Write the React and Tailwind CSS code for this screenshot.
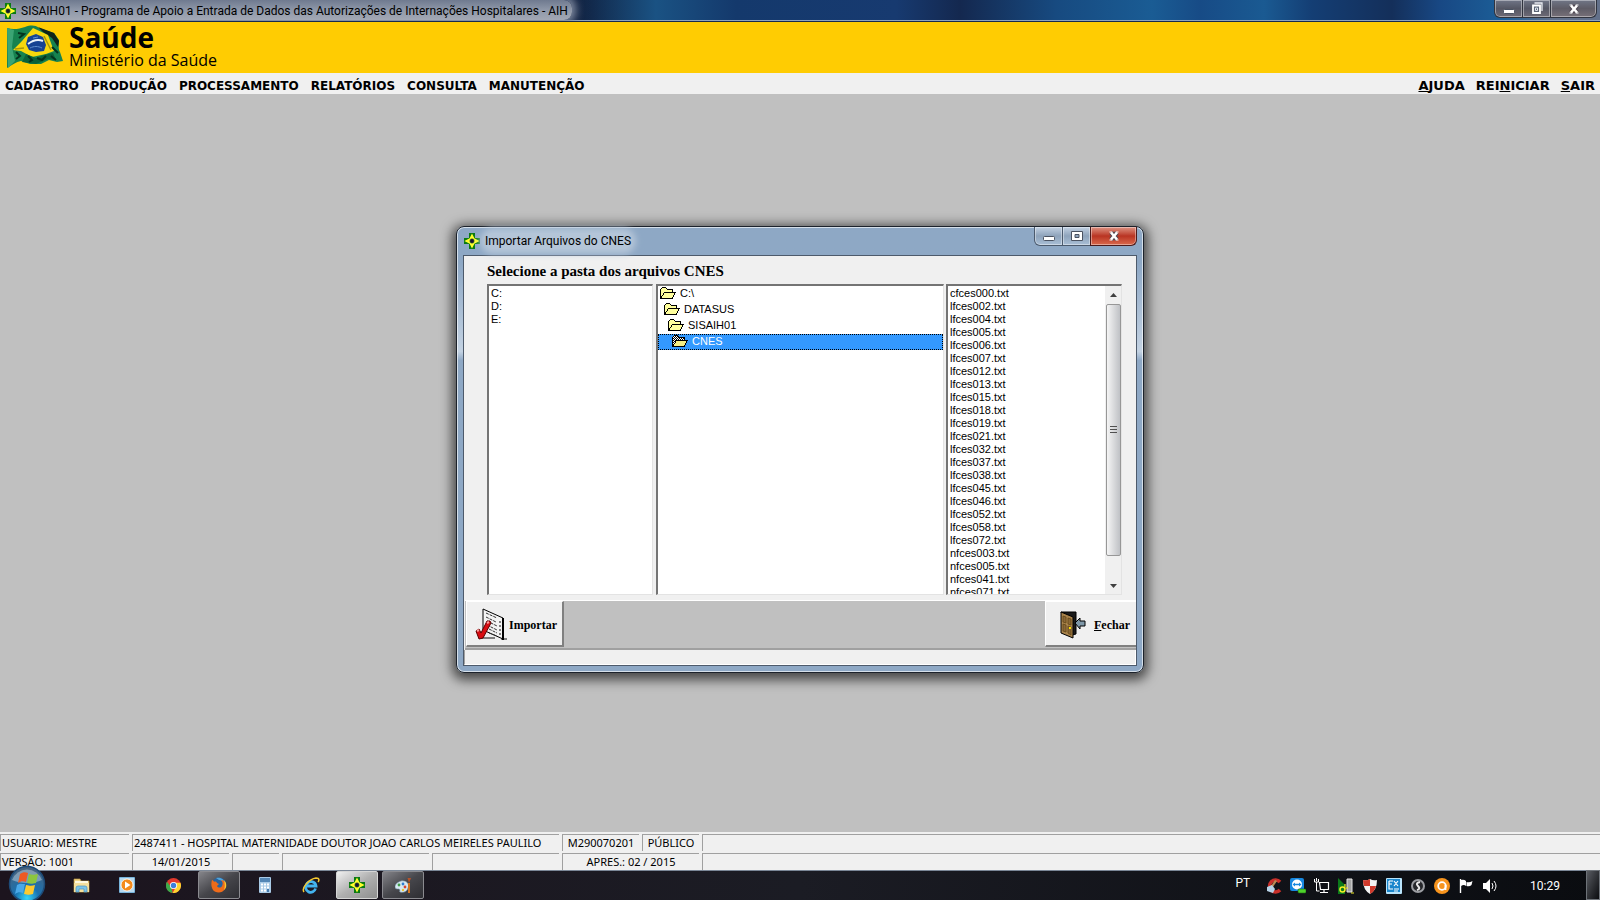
const MENU = ['CADASTRO', 'PRODUÇÃO', 'PROCESSAMENTO', 'RELATÓRIOS', 'CONSULTA', 'MANUTENÇÃO'];

const MENU_RIGHT = [
  ['', 'A', 'JUDA'],
  ['REI', 'N', 'ICIAR'],
  ['', 'S', 'AIR'],
];

const DRIVES = ['C:', 'D:', 'E:'];

const FILES = [
  'cfces000.txt', 'lfces002.txt', 'lfces004.txt', 'lfces005.txt', 'lfces006.txt', 'lfces007.txt',
  'lfces012.txt', 'lfces013.txt', 'lfces015.txt', 'lfces018.txt', 'lfces019.txt', 'lfces021.txt',
  'lfces032.txt', 'lfces037.txt', 'lfces038.txt', 'lfces045.txt', 'lfces046.txt', 'lfces052.txt',
  'lfces058.txt', 'lfces072.txt', 'nfces003.txt', 'nfces005.txt', 'nfces041.txt', 'nfces071.txt',
];

function CrossIcon({ size = 16 }) {
  return (
    <svg width={size} height={size} viewBox="0 0 16 16" className="shrink-0">
      <path d="M5 0h6v5h5v6h-5v5H5v-5H0V5h5z" fill="#0a7a12" />
      <path d="M8 2l2 4 4 2-4 2-2 4-2-4-4-2 4-2z" fill="#ffff2e" stroke="#ffff2e" strokeWidth="1.4" />
      <circle cx="8" cy="8" r="2.2" fill="#141430" stroke="#3c6a2a" strokeWidth=".6" />
    </svg>
  );
}

function FolderIcon({ selected }) {
  return (
    <svg width="16" height="13" viewBox="0 0 16 13" className="shrink-0" shapeRendering="crispEdges">
      <defs>
        <pattern id="dither" width="2" height="2" patternUnits="userSpaceOnUse">
          <rect width="2" height="2" fill="#fff" />
          <rect width="1" height="1" fill="#000" />
          <rect x="1" y="1" width="1" height="1" fill="#000" />
        </pattern>
      </defs>
      <path d="M.5 11.500V2.500l2-2h3l2 2h5v3" fill={selected ? 'url(#dither)' : '#ffff9c'} stroke="#000" />
      <path d="M.5 11.500l4-6h11l-3.500 6z" fill={selected ? '#f5ef86' : '#ffff9c'} stroke="#000" />
    </svg>
  );
}

function FlagLogo() {
  return (
    <svg width="58" height="44" viewBox="0 0 58 44" className="shrink-0">
      <path d="M1 3c6 2 12 1 18-1s10-2 14 1l15 5 5 7c0 5-1 9 1 12l3 9-6 1-8-2-8 4-11 0-9-3c-5 1-9 4-14 7z" fill="#16824f" />
      <path d="M32 2l16 6 5 8-1 6-6-9-9-6z" fill="#10241a" />
      <path d="M1 3l7 2-2 17 3 14-7 7z" fill="#3ba474" />
      <path d="M7 25l9-9 11-13 15 7 6 16-8 3-14 3-11-6z" fill="#f7d70c" />
      <path d="M20 29l-4 8 14 2 12-5 8 1-3-7-9 2-8 3z" fill="#0b6139" />
      <path d="M22 31l4 4-3 2M31 33l5 2 4-4M10 27l4 4-4 3M45 31l5 4M46 22l6 6M12 8l6 1-5 4" stroke="#04331e" strokeWidth="2" fill="none" />
      <path d="M38 11l7 14M9 24l9-1" stroke="#a89609" strokeWidth="1.500" fill="none" />
      <path d="M22 12l8-3 7 3 3 8-2 6-8 1-7-2-3-6z" fill="#164393" />
      <path d="M22 19c5-4 10-5 15-3" stroke="#e8f1fa" strokeWidth="2" fill="none" />
      <path d="M24 23c4-2 8-2 12 0M27 13l5-1" stroke="#5f8fce" strokeWidth="1" fill="none" />
    </svg>
  );
}

function WindowGlyph({ kind }) {
  if (kind === 'min') {
    return (
      <svg width="14" height="12" viewBox="0 0 14 12">
        <rect x="1.500" y="6.500" width="11" height="4" rx="1" fill="#fff" stroke="#4a5261" />
      </svg>
    );
  }
  if (kind === 'max') {
    return (
      <svg width="14" height="12" viewBox="0 0 14 12">
        <path d="M1.500 1.500h11v9h-11z M5 4.500v3h4v-3z" fill="#fff" stroke="#4a5261" fillRule="evenodd" />
      </svg>
    );
  }
  if (kind === 'restore') {
    return (
      <svg width="12" height="13" viewBox="0 0 12 13">
        <path d="M3.500 1h7.500v8" fill="none" stroke="#e9ecf2" strokeWidth="1.300" />
        <path d="M2 3.500h7v7.500H2z" fill="#5c6575" stroke="#fff" strokeWidth="1.800" />
        <path d="M4.500 6h2v2.500h-2z" fill="none" stroke="#dfe4ec" />
      </svg>
    );
  }
  return (
    <svg width="12" height="12" viewBox="0 0 12 12">
      <path d="M3 2.500l6 7M9 2.500l-6 7" stroke="#4d4650" strokeWidth="4.500" />
      <path d="M3 2.500l6 7M9 2.500l-6 7" stroke="#fff" strokeWidth="2.600" />
      <path d="M1.500 2h3M7.500 2h3M1.500 10h3M7.500 10h3" stroke="#fff" strokeWidth="1.200" />
    </svg>
  );
}

function ImportIcon() {
  return (
    <svg width="32" height="33" viewBox="0 0 32 33" className="shrink-0">
      <path d="M6 30h14M26 31h6" stroke="#808080" strokeWidth="2" />
      <path d="M8 1l20 9v21L8 22z" fill="#f4f4f4" stroke="#000" />
      <path d="M28 10v22" stroke="#000" strokeWidth="2" />
      <path d="M11 5l11 5M11 9l10 5M12 13l10 5M12 17l10 5M14 21l8 4M14 25l8 3" stroke="#333" strokeWidth="1" strokeDasharray="3 1" />
      <path d="M25 13v15" stroke="#111" strokeWidth="1" strokeDasharray="2 2" />
      <path d="M1 23l3-2 2 4 6-12 3 0 1 2-8 15-4 1z" fill="#d80d12" stroke="#5a0000" />
      <path d="M2 23l2-1M12 15l2-1" stroke="#ff9a9a" strokeWidth="2" />
    </svg>
  );
}

function DoorIcon() {
  return (
    <svg width="26" height="28" viewBox="0 0 26 28" className="shrink-0">
      <path d="M1 1h15v22l-4 1z" fill="#1b1b1b" stroke="#000" />
      <path d="M1 1l12 5v21L1 22z" fill="#a9834b" stroke="#000" />
      <path d="M3 5l3 1v6l-3-1zM8 7l3 1v6l-3-1zM3 13l3 1v7l-3-1zM8 15l3 1v8l-3-2z" fill="#8a6838" stroke="#634617" strokeWidth=".8" />
      <rect x="9" y="16" width="2" height="2" fill="#ffe800" />
      <path d="M15 12l5-5v3h5v5h-5v3z" fill="#7f98a8" stroke="#000" />
    </svg>
  );
}

function CaptionButtons({ active }) {
  const first = active
    ? 'from-[#c3d2e3] via-[#8ea3bb] to-[#a9bfd6] border-[#4b5a6d]'
    : 'from-[#707687] via-[#555764] to-[#6e6a75] border-[#30343f]';
  const close = active
    ? 'from-[#dd9283] via-[#b93322] to-[#d9684c] border-[#4b1a1a]'
    : 'from-[#707687] via-[#5e5c66] to-[#777078] border-[#30343f]';
  const mid = active ? 'max' : 'restore';
  return (
    <div className={`flex rounded-b-md ${active ? 'h-[19px]' : 'h-[18px]'}`}>
      <button aria-label="Minimizar" className={`flex w-[29px] items-center justify-center rounded-bl-md border border-t-0 bg-linear-to-b shadow-[inset_0_0_0_1px_#ffffff66] ${first}`}>
        <WindowGlyph kind="min" />
      </button>
      <button aria-label="Restaurar" className={`flex w-[27px] items-center justify-center border-b bg-linear-to-b shadow-[inset_0_0_0_1px_#ffffff66] ${first}`}>
        <WindowGlyph kind={mid} />
      </button>
      <button aria-label="Fechar janela" className={`flex w-[47px] items-center justify-center rounded-br-md border border-t-0 bg-linear-to-b shadow-[inset_0_0_0_1px_#ffffff66] ${close}`}>
        <WindowGlyph kind="close" />
      </button>
    </div>
  );
}

function Header() {
  return (
    <header>
      <div className="bg-linear-to-r from-[#8e9aab] from-0% via-[#10203f] via-37% to-[#1c5a94] to-100%">
        <div className="flex h-[22px] items-start justify-between overflow-hidden border-b border-[#17294c] bg-[linear-gradient(90deg,transparent_36%,#1a5283_41%,#14396c_46%,#173a70_56%,#14284f_60%,#174a80_66%,#1a5c94_72%,#174b86_75%,#1a5a92_79%,#143e74_82%,#142f5a_87%,#184884_90%,#1c5f98_94%,#62708a_97%)] pr-[3px] shadow-[inset_0_-1px_0_#8fa3bd]">
          <div className="flex h-5 items-center gap-[5px] rounded-r-lg bg-linear-to-b from-[#6f7a8f] via-[#8f98a9] to-[#a3a8b4] pt-px pr-1 shadow-[0_0_8px_4px_#7f8aa0]">
            <CrossIcon />
            <h1 className="text-xs whitespace-nowrap text-black">
              SISAIH01 - Programa de Apoio a Entrada de Dados das Autorizações de Internações Hospitalares - AIH
            </h1>
          </div>
          <CaptionButtons />
        </div>
      </div>
      <div className="flex h-[51px] items-start gap-[5px] bg-[#ffcc02] pt-[3px] pl-[6px] font-['Open_Sans',sans-serif]">
        <FlagLogo />
        <div className="text-black">
          <p className="text-[28px] leading-[24px] font-bold">Saúde</p>
          <p className="text-base leading-[22px]">Ministério da Saúde</p>
        </div>
      </div>
      <nav className="flex h-[21px] items-center justify-between bg-[#f0f0f0] px-[5px] pt-1 font-['DejaVu_Sans',sans-serif] font-bold text-black">
        <div className="flex gap-3 text-xs">
          {MENU.map(item => (
            <a key={item} href="#">{item}</a>
          ))}
        </div>
        <div className="flex gap-[11px] text-[13px]">
          {MENU_RIGHT.map(([before, key, after]) => (
            <a key={after} href="#">{before}<u>{key}</u>{after}</a>
          ))}
        </div>
      </nav>
    </header>
  );
}

function Panel({ className, children }) {
  return (
    <section className={`h-[311px] overflow-hidden border-t-2 border-l-2 border-t-[#747474] border-l-[#747474] border-r border-b border-r-[#e3e3e3] border-b-[#e3e3e3] bg-white ${className}`}>
      {children}
    </section>
  );
}

function FolderRow({ name, indent, selected }) {
  return (
    <li className={`flex h-4 items-center gap-1 pb-px ${indent} ${selected ? 'bg-[#3399ff] text-white outline-1 -outline-offset-1 outline-dotted outline-black' : ''}`}>
      <FolderIcon selected={selected} />
      {name}
    </li>
  );
}

function ScrollBar() {
  return (
    <div className="flex w-4 shrink-0 flex-col items-center bg-[#f0f0f0]">
      <button aria-label="Rolar para cima" className="flex h-[18px] w-full items-center justify-center">
        <svg width="7" height="4" viewBox="0 0 7 4"><path d="M0 4L3.500 0 7 4z" fill="#404040" /></svg>
      </button>
      <div className="flex h-[252px] w-[15px] flex-col items-center justify-center gap-[2px] rounded-xs border border-[#979797] bg-linear-to-r from-[#f5f5f5] via-[#dadbdd] to-[#bfc1c5]">
        <span className="h-px w-[7px] bg-[#505050]" />
        <span className="h-px w-[7px] bg-[#505050]" />
        <span className="h-px w-[7px] bg-[#505050]" />
      </div>
      <button aria-label="Rolar para baixo" className="mt-auto flex h-[15px] w-full items-center justify-center">
        <svg width="7" height="4" viewBox="0 0 7 4"><path d="M0 0L3.500 4 7 0z" fill="#404040" /></svg>
      </button>
    </div>
  );
}

function ImportDialog() {
  return (
    <div role="dialog" aria-label="Importar Arquivos do CNES" className="w-[688px] rounded-lg border border-[#1c222b] bg-linear-to-b from-[#8ea8c5] from-8% via-[#c3d2e2] via-28% to-[#8ea8c5] to-30% px-[6px] pb-[6px] shadow-[0_3px_12px_4px_#000000a0,inset_0_0_0_1px_#ffffffa0]">
      <div className="flex h-[28px] items-start justify-between">
        <div className="flex items-center gap-[5px] pt-[6px] pl-px">
          <CrossIcon />
          <h2 className="rounded-full bg-[#b4c5d8] text-xs text-black shadow-[0_0_6px_5px_#b4c5d8]">Importar Arquivos do CNES</h2>
        </div>
        <CaptionButtons active />
      </div>
      <div className="border border-[#4d5a6b] bg-[#f0f0f0]">
        <div className="pr-[14px] pl-[23px]">
          <h3 className="pt-[6px] pb-[4px] font-['Liberation_Serif',serif] text-[15px] leading-[18px] font-bold text-black">
            Selecione a pasta dos arquivos CNES
          </h3>
          <div className="flex font-['Liberation_Sans',sans-serif] text-[11px] leading-[13px] text-black">
            <Panel className="mr-[3px] w-[166px]">
              <ul className="pt-px pl-[2px]">
                {DRIVES.map(drive => <li key={drive}>{drive}</li>)}
              </ul>
            </Panel>
            <Panel className="mr-[2px] w-[288px]">
              <ul>
                <FolderRow name={'C:\\'} indent="pl-[2px]" />
                <FolderRow name="DATASUS" indent="pl-[6px]" />
                <FolderRow name="SISAIH01" indent="pl-[10px]" />
                <FolderRow name="CNES" indent="pl-[14px]" selected />
              </ul>
            </Panel>
            <Panel className="flex flex-1">
              <ul className="flex-1 pt-px pl-[2px]">
                {FILES.map(file => <li key={file}>{file}</li>)}
              </ul>
              <ScrollBar />
            </Panel>
          </div>
        </div>
        <div className="mt-[5px] ml-px flex h-[50px] items-start justify-between border-t border-b-2 border-t-white border-b-[#a0a0a0] bg-[#c0c0c0] pl-px font-['Liberation_Serif',serif] text-xs font-bold text-black">
          <button className="flex h-[46px] w-[98px] items-center gap-[2px] border-t border-r-2 border-b-2 border-l border-t-white border-r-[#808080] border-b-[#808080] border-l-white bg-[#f0f0f0] pt-[3px] pl-2">
            <ImportIcon />
            Importar
          </button>
          <button className="flex h-[46px] w-[91px] items-center gap-2 border-t border-b-2 border-l border-t-white border-b-[#808080] border-l-white bg-[#f0f0f0] pt-[3px] pl-[14px]">
            <DoorIcon />
            <span><u>F</u>echar</span>
          </button>
        </div>
        <div className="h-[15px] border-r border-b border-l border-r-white border-b-white border-l-[#a0a0a0]" />
      </div>
    </div>
  );
}

function Cell({ className, children }) {
  return (
    <div className={`h-[17px] overflow-hidden border-t border-l border-[#a0a0a0] leading-[16px] whitespace-nowrap ${className}`}>
      {children}
    </div>
  );
}

function StatusBar() {
  return (
    <footer className="flex flex-col gap-[2px] bg-[#f0f0f0] pt-[2px] font-['Noto_Sans',sans-serif] text-[11px] text-black">
      <div className="flex gap-[3px]">
        <Cell className="w-[129px] pl-px">USUARIO: MESTRE</Cell>
        <Cell className="w-[427px] pl-px">2487411 - HOSPITAL MATERNIDADE DOUTOR JOAO CARLOS MEIRELES PAULILO</Cell>
        <Cell className="w-[77px] text-center">M290070201</Cell>
        <Cell className="w-[57px] text-center">PÚBLICO</Cell>
        <Cell className="flex-1" />
      </div>
      <div className="flex gap-[3px]">
        <Cell className="w-[129px] pl-px">VERSÃO: 1001</Cell>
        <Cell className="w-[97px] text-center">14/01/2015</Cell>
        <Cell className="w-[47px]" />
        <Cell className="w-[147px]" />
        <Cell className="w-[127px]" />
        <Cell className="w-[137px] text-center">APRES.: 02 / 2015</Cell>
        <Cell className="flex-1" />
      </div>
    </footer>
  );
}

function StartOrb() {
  return (
    <svg width="38" height="38" viewBox="0 0 38 38">
      <defs>
        <radialGradient id="orb" cx="50%" cy="90%" r="85%">
          <stop offset="0" stopColor="#35d5f7" />
          <stop offset=".4" stopColor="#1872b2" />
          <stop offset="1" stopColor="#47627e" />
        </radialGradient>
      </defs>
      <circle cx="19" cy="19" r="17.500" fill="url(#orb)" stroke="#1d4b78" strokeWidth="1.500" />
      <path d="M4 15a16 16 0 0130 0c-8 4-22 4-30 0z" fill="#fff" opacity=".35" />
      <path d="M12 9c3-2 5-2 8-1l-2 9c-3-1-5-1-8 1z" fill="#ee5a24" />
      <path d="M21 9c3 1 5 1 9 0l-2 9c-4 1-6 1-9 0z" fill="#8cc63e" />
      <path d="M9 20c3-2 5-1 8-1l-2 9c-3-1-5-1-8 1z" fill="#4aa8e8" />
      <path d="M18 20c4 1 6 1 9 0l-2 9c-3 1-5 1-9 0z" fill="#fdca2e" />
    </svg>
  );
}

function ExplorerIcon() {
  return (
    <svg width="17" height="16" viewBox="0 0 17 16">
      <path d="M1 2h6l1 2h8v11H1z" fill="#f0d586" stroke="#b9963d" strokeWidth=".7" />
      <path d="M2 4h13v4H2z" fill="#fdf8df" />
      <path d="M1 6h15v9H1z" fill="#f5e09c" />
      <path d="M3 15v-4q0-2 2-2h7q2 0 2 2v4h-3v-3H6v3z" fill="#7cc4e6" stroke="#4a94c0" strokeWidth=".7" />
    </svg>
  );
}

function MediaIcon() {
  return (
    <svg width="16" height="16" viewBox="0 0 16 16">
      <rect width="16" height="16" rx="1" fill="#78b4dc" />
      <rect x="1" y="1" width="14" height="14" fill="#b8daf0" />
      <circle cx="8" cy="8" r="6" fill="#f48a1c" stroke="#fff" strokeWidth=".8" />
      <path d="M6 4.500v7L11.500 8z" fill="#fff" />
    </svg>
  );
}

function ChromeIcon() {
  return (
    <svg width="15" height="15" viewBox="0 0 16 16">
      <circle cx="8" cy="8" r="8" fill="#e2392c" />
      <path d="M1 4l5 6 1 6A8 8 0 011 4z" fill="#3cab4a" />
      <path d="M8 5h7.400A8 8 0 017 16l4-7z" fill="#fdd32f" />
      <circle cx="8" cy="8" r="3.800" fill="#fff" />
      <circle cx="8" cy="8" r="2.900" fill="#3c7fdc" />
    </svg>
  );
}

function FirefoxIcon() {
  return (
    <svg width="16" height="16" viewBox="0 0 16 16">
      <circle cx="8" cy="7.500" r="7" fill="#27639f" />
      <path d="M5 1c4-1 8 1 8 4-2-1-3-2-5-2z" fill="#51a5db" />
      <path d="M1 3c1 0 2 1 2 2 1-1 3 0 3 1l2 1-2 2c1 2 4 2 5 0 1-2 1-4-1-6 5 0 6 6 4 9-3 5-10 4-12 1C0 10 0 6 1 3z" fill="#ee6b1a" />
      <path d="M13 3c3 3 3 8 0 10 1-3 1-6 0-10z" fill="#fbc82e" />
    </svg>
  );
}

function CalcIcon() {
  return (
    <svg width="12" height="16" viewBox="0 0 12 16">
      <rect width="12" height="16" rx="1" fill="#a9cae6" />
      <rect x="1" y="1" width="10" height="4" fill="#5386b5" />
      <path d="M2 7.500h8M2 10.500h8M2 13.500h8" stroke="#fff" strokeWidth="2" strokeDasharray="2 1" />
      <rect x="8" y="12" width="2" height="3" fill="#467aad" />
    </svg>
  );
}

function ExplorerEIcon() {
  return (
    <svg width="18" height="17" viewBox="0 0 18 17">
      <path d="M13.500 11.500A5 5 0 114.500 7.500 5 5 0 0114 9H5" fill="none" stroke="#43b4ee" strokeWidth="2.800" />
      <path d="M2 15C-1 11 7 2 14 1c4 0 3 3 2 4" fill="none" stroke="#f6c92f" strokeWidth="1.500" />
    </svg>
  );
}

function PaintIcon() {
  return (
    <svg width="17" height="17" viewBox="0 0 17 17">
      <path d="M6 4c5-1 9 3 7 7-1 4-5 5-8 4-1-1 1-2-1-3-2 0-4 0-4-2 0-3 3-5 6-6z" fill="#d7e8f2" stroke="#7a98ad" strokeWidth=".6" />
      <circle cx="4" cy="8" r="1.400" fill="#3f9d48" />
      <circle cx="8" cy="7" r="1.400" fill="#2f7dd0" />
      <circle cx="10" cy="10" r="1.400" fill="#d64532" />
      <circle cx="8" cy="13" r="1.200" fill="#efc332" />
      <path d="M14 6v10" stroke="#d17521" strokeWidth="2" />
      <path d="M12.500 1l1.500 5 2-5z" fill="#b5532a" />
    </svg>
  );
}

const TASKS = [
  { name: 'Windows Explorer', icon: <ExplorerIcon /> },
  { name: 'Media Player', icon: <MediaIcon /> },
  { name: 'Chrome', icon: <ChromeIcon /> },
  { name: 'Firefox', icon: <FirefoxIcon />, open: true },
  { name: 'Calculadora', icon: <CalcIcon /> },
  { name: 'Internet Explorer', icon: <ExplorerEIcon /> },
  { name: 'SISAIH01', icon: <CrossIcon />, open: true, active: true },
  { name: 'Paint', icon: <PaintIcon />, open: true },
];

function taskClass(task) {
  if (task.active) return 'border-[#d5d5d5] bg-linear-to-br from-[#f0f0f0] via-[#b0b0b0] to-[#8e8e8e]';
  if (task.open) return 'border-[#8b8b90] bg-linear-to-br from-[#85858a] via-[#46464b] to-[#2e2e33]';
  return 'border-transparent';
}

function TrayIcons() {
  return (
    <div className="flex items-center gap-2 pt-px">
      <svg width="16" height="16" viewBox="0 0 16 16">
        <path d="M14 4A6 6 0 1014 12" fill="none" stroke="#c9302a" strokeWidth="3.500" />
        <path d="M9 2l2 1-4 6-2-1z" fill="#b98a55" />
        <path d="M1 9l5-2 3 4-2 4-6-2z" fill="#b7d3e8" />
      </svg>
      <svg width="16" height="16" viewBox="0 0 16 16">
        <rect width="14" height="13" rx="2" fill="#1688e0" />
        <circle cx="7" cy="6.500" r="5" fill="#fff" />
        <path d="M2.500 6.500L5 4.500v1.300h4V4.500l2.500 2L9 8.500V7.200H5v1.300z" fill="#1688e0" />
        <rect x="8" y="11" width="8" height="4" rx="1" fill="#4fd22c" stroke="#176a0d" strokeWidth=".6" />
      </svg>
      <svg width="16" height="16" viewBox="0 0 16 16" fill="none" stroke="#fff">
        <path d="M5.500 4.500h9v7h-8zM10 12v2M6 14.500h8" strokeWidth="1.200" />
        <path d="M.5 1v3h4V1M2.500 4v9h3M2.500 0v3" />
      </svg>
      <svg width="16" height="16" viewBox="0 0 16 16">
        <path d="M0 0l7 7v9H0z" fill="#0b7a1a" />
        <path d="M9 1h5v13H9z" fill="#a5a5a5" stroke="#e4e4e4" />
        <circle cx="4.500" cy="11.500" r="2.500" fill="none" stroke="#f2ee26" strokeWidth="1.500" />
        <path d="M7 6v3M6 10h4M13 15h3" stroke="#f2ee26" strokeWidth="1.200" />
      </svg>
      <svg width="16" height="16" viewBox="0 0 16 16">
        <path d="M1 2q4 1 7-1 3 2 7 1 0 10-7 14Q1 12 1 2z" fill="#f4f4f4" />
        <path d="M1 2q4 1 7-1v7H2Q1 5 1 2zM8 8h6q-1 5-6 8z" fill="#d03a2c" />
      </svg>
      <svg width="16" height="16" viewBox="0 0 16 16">
        <rect width="16" height="16" rx="1" fill="#b9e4fb" />
        <rect x="1" y="1" width="13" height="13" fill="#1a86cc" />
        <path d="M3 3h4M3 3v8h4M3 6h3M8 3l4 5M12 3L8 8M8 11h5M8 13h4" stroke="#fff" strokeWidth="1.200" fill="none" />
      </svg>
      <svg width="16" height="16" viewBox="0 0 16 16">
        <circle cx="8" cy="8" r="6" fill="#26272b" stroke="#9b9da2" strokeWidth="2" />
        <path d="M10 4Q5 5 8 8t-1 4" stroke="#e8e8e8" strokeWidth="2" fill="none" />
      </svg>
      <svg width="16" height="16" viewBox="0 0 16 16">
        <circle cx="8" cy="8" r="8" fill="#f7941d" />
        <circle cx="8" cy="8" r="3.800" fill="none" stroke="#fff" strokeWidth="1.800" />
        <path d="M11.500 7v5" stroke="#fff" strokeWidth="1.800" />
      </svg>
      <svg width="16" height="16" viewBox="0 0 16 16">
        <path d="M2.500 1v14" stroke="#fff" strokeWidth="1.400" />
        <path d="M3 2q3-1 5 1v5Q6 6 3 8zM8.500 4q3 1 6-1l-1 4q-2 2-5 1z" fill="#fff" />
      </svg>
      <svg width="16" height="16" viewBox="0 0 16 16">
        <path d="M1 5h3l4-4v14l-4-4H1z" fill="#fff" />
        <path d="M10 5q2 3 0 6M12 3q4 5 0 10" stroke="#fff" fill="none" />
      </svg>
    </div>
  );
}

function Taskbar() {
  return (
    <div className="flex h-[30px] items-center bg-linear-to-r from-[#1c141e] via-[#1b1c24] to-[#0a0c10] text-xs text-white shadow-[inset_0_1px_0_#7b8797]">
      <button aria-label="Iniciar" className="z-10 -mt-[2px] ml-2 shrink-0">
        <StartOrb />
      </button>
      <div className="ml-[14px] flex gap-1">
        {TASKS.map(task => (
          <button key={task.name} aria-label={task.name} className={`flex h-7 w-[42px] items-center justify-center rounded-xs border ${taskClass(task)}`}>
            {task.icon}
          </button>
        ))}
      </div>
      <div className="ml-auto flex h-full items-center">
        <span className="mr-4 pb-1">PT</span>
        <TrayIcons />
        <time className="mr-[26px] ml-8 pt-px">10:29</time>
        <button aria-label="Mostrar área de trabalho" className="h-full w-[14px] border border-[#6d7278] bg-linear-to-br from-[#5a5d63] to-[#0c0d10]" />
      </div>
    </div>
  );
}

export default function App() {
  return (
    <div className="flex min-h-screen flex-col bg-[#c0c0c0] font-[Roboto,sans-serif]">
      <Header />
      <main className="flex flex-1 items-center justify-center pb-7">
        <ImportDialog />
      </main>
      <StatusBar />
      <Taskbar />
    </div>
  );
}
